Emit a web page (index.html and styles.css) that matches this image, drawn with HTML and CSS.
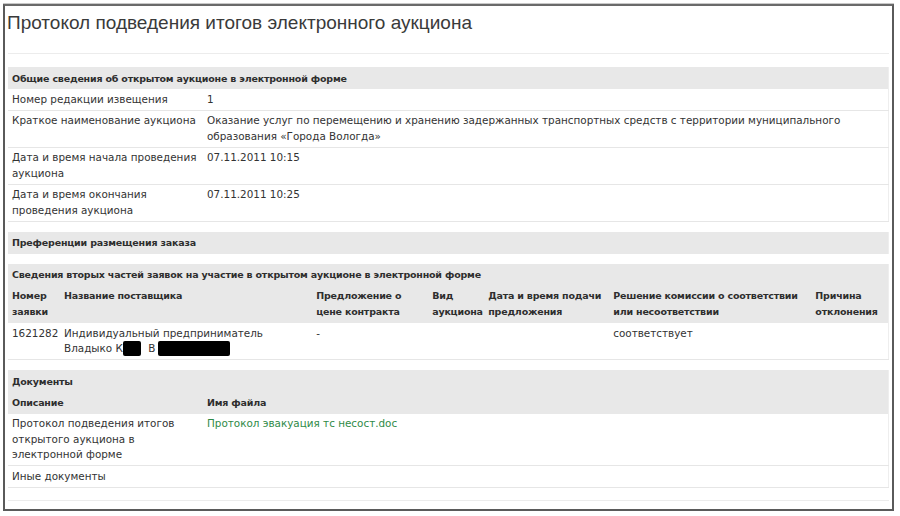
FILE: index.html
```html
<!DOCTYPE html>
<html lang="ru">
<head>
<meta charset="utf-8">
<title>Протокол подведения итогов электронного аукциона</title>
<link rel="stylesheet" href="styles.css">
</head>
<body>
<div class="frame">
  <h1 class="title">Протокол подведения итогов электронного аукциона</h1>
  <div class="rule"></div>

  <table class="sect info">
    <colgroup><col class="c-label"><col></colgroup>
    <tr class="band"><th colspan="2">Общие сведения об открытом аукционе в электронной форме</th></tr>
    <tr><td>Номер редакции извещения</td><td>1</td></tr>
    <tr><td>Краткое наименование аукциона</td><td>Оказание услуг по перемещению и хранению задержанных транспортных средств с территории муниципального образования «Города Вологда»</td></tr>
    <tr><td>Дата и время начала проведения аукциона</td><td>07.11.2011 10:15</td></tr>
    <tr><td>Дата и время окончания проведения аукциона</td><td>07.11.2011 10:25</td></tr>
  </table>

  <table class="sect">
    <tr class="band"><th>Преференции размещения заказа</th></tr>
  </table>

  <table class="sect bids">
    <colgroup>
      <col class="b1"><col class="b2"><col class="b3"><col class="b4"><col class="b5"><col class="b6"><col class="b7">
    </colgroup>
    <tr class="band"><th colspan="7">Сведения вторых частей заявок на участие в открытом аукционе в электронной форме</th></tr>
    <tr class="band heads">
      <th>Номер заявки</th>
      <th>Название поставщика</th>
      <th>Предложение о цене контракта</th>
      <th>Вид аукциона</th>
      <th>Дата и время подачи предложения</th>
      <th>Решение комиссии о соответствии или несоответствии</th>
      <th>Причина отклонения</th>
    </tr>
    <tr>
      <td>1621282</td>
      <td>Индивидуальный предприниматель Владыко К<span class="redact r1"></span> В<span class="redact r2"></span></td>
      <td>-</td>
      <td></td>
      <td></td>
      <td>соответствует</td>
      <td></td>
    </tr>
  </table>

  <table class="sect docs">
    <colgroup><col class="c-label"><col></colgroup>
    <tr class="band"><th colspan="2">Документы</th></tr>
    <tr class="band heads"><th>Описание</th><th>Имя файла</th></tr>
    <tr><td class="wrap">Протокол подведения итогов открытого аукциона в электронной форме</td><td><a href="#" class="file">Протокол эвакуация тс несост.doc</a></td></tr>
    <tr><td>Иные документы</td><td></td></tr>
  </table>
  <div class="rule tail"></div>
</div>
</body>
</html>
```

FILE: styles.css
```css
html, body {
  margin: 0;
  padding: 0;
  background: #ffffff;
}

body {
  font-family: "DejaVu Sans", Verdana, sans-serif;
  color: #333333;
}

.frame {
  margin: 4px 0 0 3px;
  width: 881px;
  height: 503px;
  padding: 0 3px;
  border: 2px solid #5a5a5a;
  border-top-color: #6a6a6a;
  box-shadow: 0 -1px 0 #c8c8c8;
  overflow: hidden;
}

.title {
  margin: 5px 0 0 -1px;
  font-family: "Liberation Sans", Arial, sans-serif;
  font-weight: normal;
  font-size: 19px;
  line-height: 24px;
  color: #3a3a3a;
}

.rule {
  height: 1px;
  background: #ececec;
  margin-top: 18px;
}

.sect {
  width: 100%;
  border-collapse: collapse;
  table-layout: fixed;
  margin-top: 10px;
  font-size: 10.4px;
  line-height: 15.5px;
  border-right: 1px solid #eeeeee;
}

.info {
  margin-top: 13px;
}

.c-label {
  width: 195px;
}

.sect th,
.sect td {
  text-align: left;
  vertical-align: top;
  padding: 2.5px 4px;
}

.sect td {
  border-bottom: 1px solid #e6e6e6;
  color: #333333;
}

.band th {
  background: #e8e8e8;
  font-weight: bold;
  font-size: 9.5px;
  letter-spacing: -0.2px;
  color: #2e2e2e;
  padding: 3px 4px;
}

.band:first-child th {
  padding-top: 3.5px;
  padding-bottom: 3px;
}

.heads th {
  padding-top: 2.5px;
  padding-bottom: 3px;
  line-height: 16px;
}

.b1 { width: 52px; }
.b2 { width: 252px; }
.b3 { width: 116px; }
.b4 { width: 56px; }
.b5 { width: 125px; }
.b6 { width: 202px; }
.b7 { width: 77px; }

.redact {
  display: inline-block;
  background: #000000;
  height: 15px;
  vertical-align: -4px;
  border-radius: 2px;
}

.r1 {
  width: 18px;
  margin-right: 4px;
}

.r2 {
  width: 72px;
  margin-left: 3px;
}

.wrap {
  padding-right: 30px;
}

.file {
  color: #2f8a47;
  text-decoration: none;
}

.tail {
  margin-top: 12px;
}
```
